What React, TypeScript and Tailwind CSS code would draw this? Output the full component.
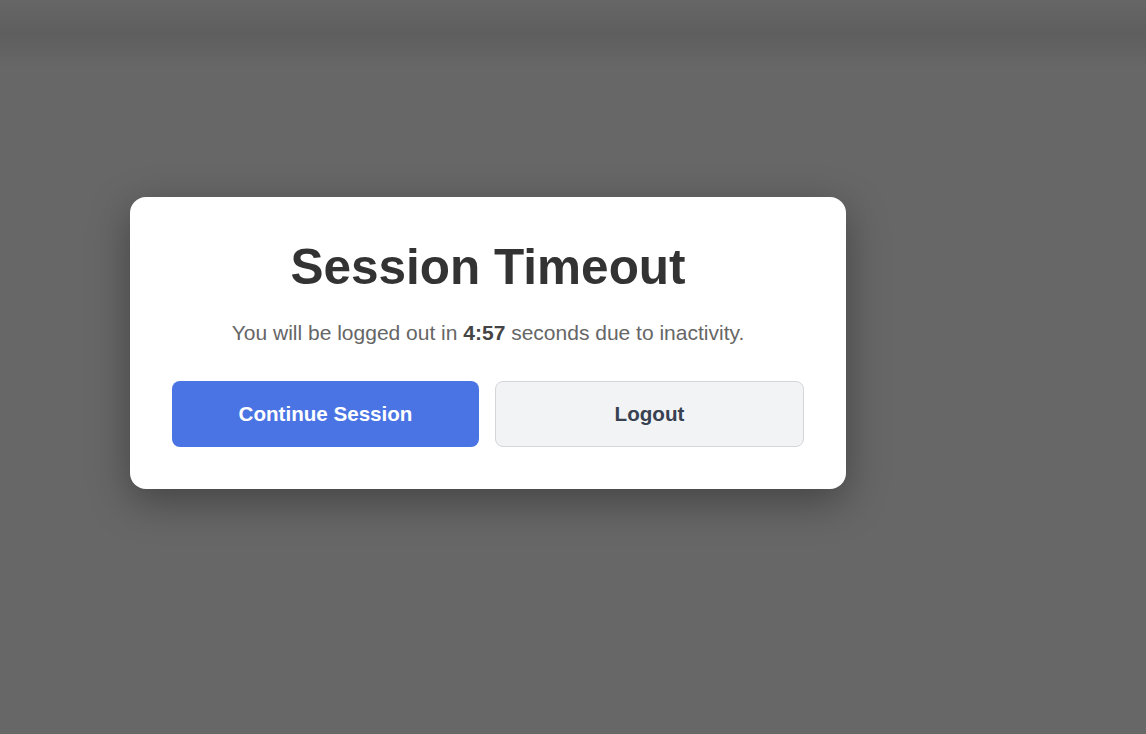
export default function App() {
  return (
    <div
      className="relative h-[734px] w-full overflow-hidden bg-[#676767]"
      style={{ fontFamily: '"Liberation Sans", Arial, Helvetica, sans-serif' }}
    >
      {/* faint header band behind the overlay */}
      <div className="h-[68px] w-full bg-linear-to-b from-[#666666] via-[#5e5e5e] to-[#676767]" />

      <div className="pl-[130px] pt-[129px]">
        <div className="w-[716px] rounded-[16px] bg-white px-[42px] pb-[42px] pt-[40px] text-center shadow-[0_12px_40px_rgba(0,0,0,0.35)]">
          <h1 className="mb-[21px] text-[49.5px] font-bold leading-[1.2] text-[#333333]">
            Session Timeout
          </h1>
          <p className="mb-[33px] text-[21px] leading-[31px] text-[#666666]">
            You will be logged out in{" "}
            <strong className="font-bold text-[#444444]">4:57</strong> seconds
            due to inactivity.
          </p>
          <div className="flex gap-[16px]">
            <button className="h-[66px] flex-1 rounded-[8px] bg-[#4a74e4] text-[20.6px] font-bold text-white">
              Continue Session
            </button>
            <button className="h-[66px] flex-1 rounded-[8px] border border-[#d4d6da] bg-[#f2f3f5] text-[20.6px] font-bold text-[#374151]">
              Logout
            </button>
          </div>
        </div>
      </div>
    </div>
  );
}
